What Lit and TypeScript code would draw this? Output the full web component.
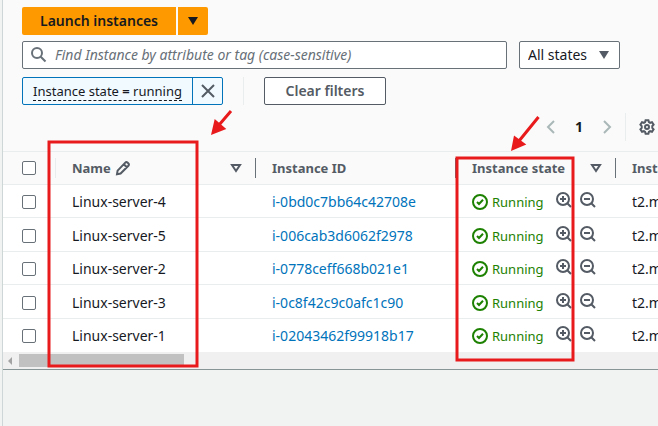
import { LitElement, html, svg, css } from "lit";
import { customElement, state } from "lit/decorators.js";

interface Instance {
  name: string;
  id: string;
  type: string;
}

const instances: Instance[] = [
  { name: "Linux-server-4", id: "i-0bd0c7bb64c42708e", type: "t2.micro" },
  { name: "Linux-server-5", id: "i-006cab3d6062f2978", type: "t2.micro" },
  { name: "Linux-server-2", id: "i-0778ceff668b021e1", type: "t2.micro" },
  { name: "Linux-server-3", id: "i-0c8f42c9c0afc1c90", type: "t2.micro" },
  { name: "Linux-server-1", id: "i-02043462f99918b17", type: "t2.micro" },
];

const icon = (body: unknown) =>
  html`<svg class="icon" viewBox="0 0 16 16" aria-hidden="true">${body}</svg>`;

const caret = svg`<path class="solid" d="M3 4h10L8 12z" />`;
const search = svg`<circle cx="6" cy="6" r="5" /><path d="M9.700 9.700 14.500 14.500" />`;
const close = svg`<path d="m2 2 12 12M14 2 2 14" />`;
const left = svg`<path d="M11 2 5 8l6 6" />`;
const right = svg`<path d="m5 2 6 6-6 6" />`;
const sort = svg`<path d="M4 5h8l-4 6z" />`;
const pencil = svg`<path d="M2 14.2 2.6 10.6 10.3 2.6Q11.3 1.6 12.5 2.6L13.4 3.5Q14.5 4.6 13.4 5.7L5.6 13.5zM8.8 4.3l3 3" />`;
const check = svg`<circle cx="8" cy="8" r="7" /><path d="m5 8 2 2 4-4.3" />`;
const zoomIn = svg`<circle cx="7" cy="7" r="6" /><path d="M11.3 11.3 15 15M4 7h6M7 4v6" />`;
const zoomOut = svg`<circle cx="7" cy="7" r="6" /><path d="M11.3 11.3 15 15M4 7h6" />`;
const gear = svg`<path d="M6.6 1.2h2.8l.5 1.9 1.2.7 1.9-.6 1.6 2.4-1.3 1.4v1.9l1.3 1.5-1.6 2.4-1.9-.6-1.2.7-.5 1.9H6.6l-.5-1.9-1.2-.7-1.9.6-1.6-2.4 1.3-1.5V7.1L1.4 5.6 3 3.2l1.9.6 1.2-.7z" /><circle cx="8" cy="8" r="2" />`;

@customElement("app-root")
export class AppRoot extends LitElement {
  @state() private filtered = true;

  static styles = css`
    :host {
      display: block;
      min-height: 100vh;
      box-sizing: border-box;
      position: relative;
      overflow: hidden;
      padding-left: 2px;
      background: #f1f3f3;
      color: #16191f;
      font: 14px/20px "Noto Sans", "Open Sans", sans-serif;
    }
    * {
      box-sizing: border-box;
    }
    button,
    input,
    select {
      margin: 0;
      padding: 0;
      border: 0;
      background: none;
      color: inherit;
      font: inherit;
    }
    .page {
      min-height: 100vh;
      border-left: 1px solid #cfd6d6;
    }
    .panel {
      background: #fafafa;
      border-bottom: 1px solid #879596;
    }
    .icon {
      display: block;
      flex: none;
      width: 16px;
      height: 16px;
      fill: none;
      stroke: currentColor;
      stroke-width: 2;
    }
    .solid {
      fill: currentColor;
      stroke: none;
    }
    .tools {
      display: flex;
      flex-direction: column;
      gap: 8px;
      padding: 7px 38px 8px 19px;
    }
    .row {
      display: flex;
      height: 28px;
    }
    .actions {
      gap: 2px;
      margin-bottom: -2px;
    }
    .primary {
      display: flex;
      align-items: center;
      justify-content: center;
      background: #ff9900;
      font-weight: 600;
    }
    .launch {
      width: 154px;
      border-radius: 2px 0 0 2px;
    }
    .more {
      width: 30px;
      border-radius: 0 2px 2px 0;
    }
    .filters {
      gap: 12px;
    }
    .search {
      flex: 1;
      display: flex;
      align-items: center;
      gap: 8px;
      padding: 0 8px;
      border: 1px solid #687078;
      border-radius: 2px;
      background: #fff;
      color: #687078;
    }
    .query {
      flex: 1;
      min-width: 0;
      color: #16191f;
    }
    .query::placeholder {
      color: #687078;
      font-style: italic;
    }
    .states {
      display: grid;
      width: 101px;
      align-items: center;
      color: #545b64;
    }
    .states > * {
      grid-area: 1 / 1;
    }
    .states .icon {
      justify-self: end;
      margin-right: 8px;
      pointer-events: none;
    }
    .select {
      appearance: none;
      width: 100%;
      height: 28px;
      padding-left: 8px;
      border: 1px solid #687078;
      border-radius: 2px;
      background: #fff;
      color: #16191f;
    }
    .chip {
      display: flex;
      width: 201px;
      border: 1px solid #0073bb;
      border-radius: 2px;
      background: #f1faff;
    }
    .term {
      flex: 1;
      display: flex;
      align-items: center;
      justify-content: center;
      font-size: 13px;
    }
    .term span {
      line-height: 18px;
      border-bottom: 1px dashed #16191f;
    }
    .remove {
      display: flex;
      width: 30px;
      align-items: center;
      justify-content: center;
      border-left: 1px solid #0073bb;
      color: #545b64;
    }
    .rule {
      width: 1px;
      margin: 0 20px;
      background: #eaeded;
    }
    .clear {
      width: 122px;
      border: 1px solid #545b64;
      border-radius: 2px;
      background: #fff;
      color: #545b64;
      font-weight: 600;
    }
    .pager {
      display: flex;
      height: 28px;
      margin-bottom: 10px;
      padding-right: 3px;
      align-items: center;
      justify-content: flex-end;
      color: #545b64;
    }
    .pager .rule {
      height: 28px;
      margin: 0 13px 0 10px;
    }
    .step {
      color: #aab7b8;
    }
    .current {
      width: 40px;
      text-align: center;
      color: #16191f;
      font-weight: 700;
    }
    .scroller {
      overflow: hidden;
      border-top: 1px solid #eaeded;
    }
    .table {
      width: 773px;
      table-layout: fixed;
      border-collapse: separate;
      border-spacing: 0;
    }
    .pick {
      width: 53px;
    }
    .wide {
      width: 200px;
    }
    .medium {
      width: 160px;
    }
    th,
    td {
      height: 33px;
      padding: 0 0 0 16px;
      border-bottom: 1px solid #eaeded;
      text-align: left;
      white-space: nowrap;
    }
    td {
      padding-top: 2px;
      background: #fff;
    }
    tbody tr:nth-child(even) td {
      height: 34px;
    }
    tbody tr:last-child td {
      border-bottom-color: #fff;
    }
    th:first-child,
    td:first-child {
      padding-left: 19px;
    }
    th {
      color: #545b64;
      font-size: 13px;
      font-weight: 700;
    }
    .head {
      display: flex;
      height: 20px;
      align-items: center;
      gap: 4px;
      padding-right: 11px;
      border-right: 1px solid #687078;
    }
    .head.plain {
      border-right-color: #eaeded;
    }
    .sort {
      margin-left: auto;
    }
    .box {
      appearance: none;
      display: block;
      width: 14px;
      height: 14px;
      border: 1px solid #687078;
      border-radius: 2px;
      background: #fff;
    }
    .box:checked {
      background: #0073bb;
    }
    .link {
      color: #0073bb;
      text-decoration: none;
    }
    .status {
      display: flex;
      align-items: center;
      gap: 4px;
      color: #1d8102;
      font-size: 13px;
    }
    .zooms {
      display: flex;
      gap: 8px;
      margin-left: 8px;
      padding-bottom: 4px;
      color: #545b64;
    }
    .scrollbar {
      display: flex;
      height: 17px;
      align-items: center;
      background: #f0f0f0;
      color: #a3a3a3;
    }
    .thumb {
      width: 165px;
      height: 13px;
      background: #c1c1c1;
    }
    .marks {
      position: absolute;
      top: 0;
      left: 0;
      width: 658px;
      height: 426px;
      pointer-events: none;
      fill: none;
      stroke: #e81a1c;
      stroke-width: 3;
    }
    .tip {
      fill: #e81a1c;
      stroke: none;
    }
  `;

  private sortButton(label: string) {
    return html`<button class="sort" aria-label=${label}>${icon(sort)}</button>`;
  }

  private renderRow(item: Instance) {
    return html`<tr>
      <td><input class="box" type="checkbox" aria-label="Select ${item.name}" /></td>
      <td>${item.name}</td>
      <td><a class="link" href="#${item.id}">${item.id}</a></td>
      <td>
        <div class="status">
          ${icon(check)}<span>Running</span>
          <div class="zooms">
            <button aria-label="Include state">${icon(zoomIn)}</button>
            <button aria-label="Exclude state">${icon(zoomOut)}</button>
          </div>
        </div>
      </td>
      <td>${item.type}</td>
    </tr>`;
  }

  render() {
    const clear = () => (this.filtered = false);
    return html`
      <main class="page">
        <section class="panel">
          <div class="tools">
            <div class="row actions">
              <button class="primary launch">Launch instances</button>
              <button class="primary more" aria-label="More launch options">${icon(caret)}</button>
            </div>
            <div class="row filters">
              <label class="search">
                ${icon(search)}
                <input
                  class="query"
                  type="text"
                  aria-label="Find instance"
                  placeholder="Find Instance by attribute or tag (case-sensitive)"
                />
              </label>
              <div class="states">
                <select class="select" aria-label="Instance states">
                  <option>All states</option>
                </select>
                ${icon(caret)}
              </div>
            </div>
            <div class="row">
              ${this.filtered
                ? html`<div class="chip">
                      <button class="term"><span>Instance state <b>=</b> running</span></button>
                      <button class="remove" aria-label="Remove filter" @click=${clear}>${icon(close)}</button>
                    </div>
                    <div class="rule"></div>
                    <button class="clear" @click=${clear}>Clear filters</button>`
                : null}
            </div>
          </div>
          <nav class="pager" aria-label="Pages">
            <button class="step" aria-label="Previous page">${icon(left)}</button>
            <button class="current">1</button>
            <button class="step" aria-label="Next page">${icon(right)}</button>
            <div class="rule"></div>
            <button aria-label="Preferences">${icon(gear)}</button>
          </nav>
          <div class="scroller">
            <table class="table">
              <colgroup>
                <col class="pick" />
                <col class="wide" />
                <col class="wide" />
                <col class="medium" />
                <col class="medium" />
              </colgroup>
              <thead>
                <tr>
                  <th scope="col">
                    <div class="head plain">
                      <input class="box" type="checkbox" aria-label="Select all" />
                    </div>
                  </th>
                  <th scope="col">
                    <div class="head">Name ${icon(pencil)} ${this.sortButton("Sort by name")}</div>
                  </th>
                  <th scope="col"><div class="head">Instance ID</div></th>
                  <th scope="col">
                    <div class="head">Instance state ${this.sortButton("Sort by state")}</div>
                  </th>
                  <th scope="col"><div class="head">Instance type</div></th>
                </tr>
              </thead>
              <tbody>
                ${instances.map((item) => this.renderRow(item))}
              </tbody>
            </table>
          </div>
          <div class="scrollbar">
            ${icon(svg`<path class="solid" d="M9 4v8L5 8z" />`)}
            <div class="thumb"></div>
          </div>
        </section>
      </main>
      <svg class="marks" viewBox="0 0 658 426" aria-hidden="true">
        <rect x="49" y="142" width="148" height="224" />
        <rect x="457" y="158" width="116" height="202" />
        <path d="M231 111 219 125M538.500 117 519 141" />
        <path class="tip" d="M211 135l3.700-16 11.600 10zM511 151l3-15.500 12.300 9z" />
      </svg>
    `;
  }
}
